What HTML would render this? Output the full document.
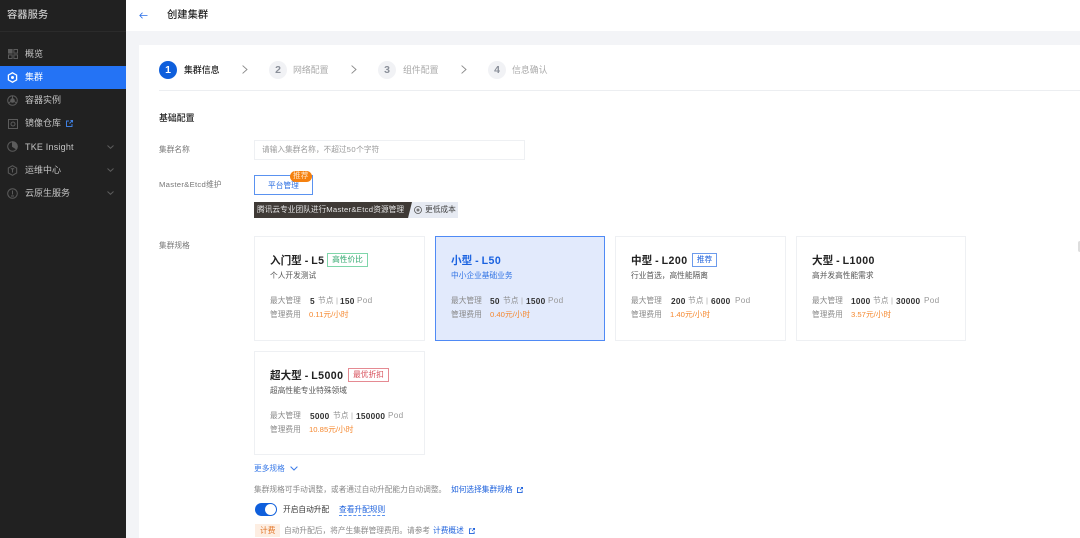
<!DOCTYPE html>
<html lang="zh-CN">
<head>
<meta charset="utf-8">
<title>创建集群</title>
<style>
*{box-sizing:border-box;margin:0;padding:0}
html,body{width:1080px;height:538px;overflow:hidden;background:#f3f4f7}
body{position:relative;font-family:"Liberation Sans","Noto Sans CJK SC",sans-serif;font-size:7.7px;color:#333;filter:blur(.3px)}
u{text-decoration:none;letter-spacing:.28px}
.t{position:absolute;white-space:nowrap;line-height:12px}
.a{position:absolute}
svg{position:absolute;overflow:visible}
#side{left:0;top:0;width:126px;height:538px;background:#212121}
.nav{color:#c4c4c4;font-size:9px}
.g{color:#777}
.card{position:absolute;width:171px;height:105px;background:#fff;border:1px solid #eef0f3}
.card.sel{background:#e2eafc;border:1px solid #4f8af5}
.title{position:absolute;left:15px;top:17px;line-height:14px;font-size:10.6px;font-weight:700;color:#222;white-space:nowrap}
.title u{letter-spacing:.45px}
.sub{position:absolute;left:15px;top:33px;line-height:12px;font-size:7.7px;color:#555;white-space:nowrap}
.r1{position:absolute;left:15px;top:58px;line-height:12px;font-size:7.7px;color:#888;white-space:nowrap}
.r2{position:absolute;left:15px;top:72px;line-height:12px;font-size:7.7px;color:#888;white-space:nowrap}
.r1 b{position:absolute;top:0;color:#333;font-weight:700;font-size:8.3px;letter-spacing:.25px}
.r1 i,.r2 i{position:absolute;top:0;font-style:normal}
.r1 i.p{font-size:8.2px;letter-spacing:.3px;color:#999}
.r2 i{color:#f5882f}
.tag{position:absolute;top:16px;height:14px;line-height:12px;font-size:7.7px;text-align:center;border:1px solid;white-space:nowrap}
.num{position:absolute;width:18px;height:18px;border-radius:50%;background:#f1f2f5;color:#8a8f99;text-align:center;line-height:18px;font-size:10.5px;font-weight:700;top:61px}
.step{position:absolute;top:64px;line-height:12px;font-size:8.9px;color:#aaa;white-space:nowrap}
.blue{color:#1d61dc}
</style>
</head>
<body>
<div id="side" class="a"></div>
<div class="a" style="left:0;top:31px;width:126px;height:1px;background:#2b2b2b"></div>
<div class="t" style="left:7px;top:9px;line-height:14px;font-size:10.3px;color:#c9c9c9;font-weight:500">容器服务</div>

<svg style="left:8px;top:49px" width="10" height="10" viewBox="0 0 10 10" fill="none" stroke="#5c5c5c" stroke-width="1"><rect x=".5" y=".5" width="3.6" height="3.6" fill="#5c5c5c"/><rect x="5.9" y=".5" width="3.6" height="3.6"/><rect x=".5" y="5.9" width="3.6" height="3.6"/><rect x="5.9" y="5.9" width="3.6" height="3.6"/></svg>
<div class="t nav" style="left:25px;top:48px">概览</div>

<div class="a" style="left:0;top:66px;width:126px;height:23px;background:#2473f5"></div>
<svg style="left:7px;top:72px" width="11" height="11" viewBox="0 0 11 11" fill="none" stroke="#fff" stroke-width="1.3"><path d="M5.5.8 9.6 3.1V7.900L5.500 10.200 1.400 7.900V3.100Z"/><circle cx="5.500" cy="5.500" r="1.500" fill="#fff" stroke="none"/></svg>
<div class="t nav" style="left:25px;top:71px;color:#fff">集群</div>

<svg style="left:7px;top:95px" width="11" height="11" viewBox="0 0 11 11" fill="none" stroke="#5c5c5c" stroke-width="1"><circle cx="5.500" cy="5.500" r="4.800"/><circle cx="5.500" cy="5.500" r="1.800" fill="#5c5c5c"/><path d="M5.500.8V3.500M1.400 8 3.800 6.500M9.600 8 7.200 6.500"/></svg>
<div class="t nav" style="left:25px;top:94px">容器实例</div>

<svg style="left:8px;top:119px" width="10" height="10" viewBox="0 0 10 10" fill="none" stroke="#5c5c5c" stroke-width="1"><rect x=".5" y=".5" width="9" height="9"/><circle cx="5" cy="5" r="2"/></svg>
<div class="t nav" style="left:25px;top:117px">镜像仓库</div>
<svg style="left:66px;top:120px" width="7" height="7" viewBox="0 0 7 7" fill="none" stroke="#3f7fe0" stroke-width="1"><path d="M3 1H.5V6.500H6V4M3.500 3.500 6.500.5M4.500.5H6.500V2.500"/></svg>

<svg style="left:7px;top:141px" width="11" height="11" viewBox="0 0 11 11" fill="none" stroke="#5c5c5c" stroke-width="1"><circle cx="5.500" cy="5.500" r="4.800"/><path d="M5.500.7V5.500L9.500 8A4.800 4.800 0 0 0 5.500.7Z" fill="#5c5c5c"/></svg>
<div class="t nav" style="left:25px;top:141px;letter-spacing:.2px">TKE Insight</div>
<svg style="left:107px;top:145px" width="7" height="4" viewBox="0 0 7 4" fill="none" stroke="#5c5c5c" stroke-width="1"><path d="M.5.500 3.500 3.300 6.500.5"/></svg>

<svg style="left:7px;top:165px" width="11" height="11" viewBox="0 0 11 11" fill="none" stroke="#5c5c5c" stroke-width="1"><path d="M5.500.7 9.700 3.100V7.900L5.500 10.300 1.300 7.900V3.100Z"/><path d="M3.800 3.800H7.200M5.500 3.800V7.500"/></svg>
<div class="t nav" style="left:25px;top:164px">运维中心</div>
<svg style="left:107px;top:168px" width="7" height="4" viewBox="0 0 7 4" fill="none" stroke="#5c5c5c" stroke-width="1"><path d="M.5.500 3.500 3.300 6.500.5"/></svg>

<svg style="left:7px;top:188px" width="11" height="11" viewBox="0 0 11 11" fill="none" stroke="#5c5c5c" stroke-width="1"><circle cx="5.500" cy="5.500" r="4.800"/><path d="M5.500 2.500V6.500M4 8H7"/></svg>
<div class="t nav" style="left:25px;top:187px">云原生服务</div>
<svg style="left:107px;top:191px" width="7" height="4" viewBox="0 0 7 4" fill="none" stroke="#5c5c5c" stroke-width="1"><path d="M.5.500 3.500 3.300 6.500.5"/></svg>

<!-- header -->
<div class="a" style="left:126px;top:0;width:954px;height:31px;background:#fff"></div>
<svg style="left:139px;top:12px" width="9" height="7" viewBox="0 0 9 7" fill="none" stroke="#2a6fe8" stroke-width=".8"><path d="M8.500 3.500H.8M3.500.7.800 3.500 3.500 6.300"/></svg>
<div class="t" style="left:167px;top:9px;line-height:14px;font-size:10.3px;color:#222;font-weight:500">创建集群</div>

<!-- panel -->
<div class="a" style="left:139px;top:45px;width:941px;height:493px;background:#fff"></div>
<div class="a" style="left:159px;top:90px;width:921px;height:1px;background:#eceef1"></div>

<div class="num" style="left:159px;background:#0f5fdc;color:#fff">1</div>
<div class="step" style="left:184px;color:#222;font-weight:500">集群信息</div>
<svg style="left:242px;top:65px" width="6" height="9" viewBox="0 0 6 9" fill="none" stroke="#888" stroke-width=".9"><path d="M.6.600 5 4.500.6 8.400"/></svg>
<div class="num" style="left:269px">2</div>
<div class="step" style="left:293px">网络配置</div>
<svg style="left:351px;top:65px" width="6" height="9" viewBox="0 0 6 9" fill="none" stroke="#888" stroke-width=".9"><path d="M.6.600 5 4.500.6 8.400"/></svg>
<div class="num" style="left:378px">3</div>
<div class="step" style="left:403px">组件配置</div>
<svg style="left:461px;top:65px" width="6" height="9" viewBox="0 0 6 9" fill="none" stroke="#888" stroke-width=".9"><path d="M.6.600 5 4.500.6 8.400"/></svg>
<div class="num" style="left:488px">4</div>
<div class="step" style="left:512px">信息确认</div>

<div class="t" style="left:159px;top:112px;font-size:8.9px;color:#222;font-weight:500">基础配置</div>

<div class="t g" style="left:159px;top:144px">集群名称</div>
<div class="a" style="left:254px;top:140px;width:271px;height:20px;border:1px solid #eef0f3;background:#fff"></div>
<div class="t" style="left:262px;top:144px;color:#999">请输入集群名称，不超过<u style="letter-spacing:.5px">50</u>个字符</div>

<div class="t g" style="left:159px;top:179px"><u>Master&amp;Etcd</u>维护</div>
<div class="a" style="left:254px;top:175px;width:59px;height:20px;border:1px solid #5a92f0;background:#fff"></div>
<div class="t" style="left:268px;top:180px;color:#2b6ee0">平台管理</div>
<div class="a" style="left:290px;top:171px;width:22px;height:11px;border-radius:6px;background:#f5810f"></div>
<div class="t" style="left:293px;top:170px;color:#ffe3c4;line-height:12px;font-size:7.7px">推荐</div>

<div class="a" style="left:254px;top:202px;width:204px;height:16px;background:#e6eaf2"></div>
<div class="a" style="left:254px;top:202px;width:158px;height:16px;background:#3f3a36;clip-path:polygon(0 0,100% 0,97.500% 100%,0 100%)"></div>
<div class="t" style="left:257px;top:204px;color:#e6e6e6">腾讯云专业团队进行<u>Master&amp;Etcd</u>资源管理</div>
<svg style="left:414px;top:206px" width="8" height="8" viewBox="0 0 8 8" fill="none" stroke="#555" stroke-width=".8"><circle cx="4" cy="4" r="3.500"/><circle cx="4" cy="4" r="1.500" fill="#777" stroke="none"/></svg>
<div class="t" style="left:425px;top:204px;color:#444">更低成本</div>

<div class="t g" style="left:159px;top:240px">集群规格</div>

<div class="a" style="left:1078px;top:241px;width:2px;height:11px;background:#ddd;border-radius:2px 0 0 2px"></div>

<!-- cards -->
<div class="card" style="left:254px;top:236px;width:171px">
  <div class="title">入门型 - <u>L5</u></div>
  <div class="tag" style="left:72px;width:41px;color:#2fa76c;border-color:#7fd6aa">高性价比</div>
  <div class="sub">个人开发测试</div>
  <div class="r1">最大管理<b style="left:40px">5</b><i style="left:48px">节点</i><i style="left:66px;color:#aaa">|</i><b style="left:70px">150</b><i class="p" style="left:87px">Pod</i></div>
  <div class="r2">管理费用<i style="left:39px">0.11元/小时</i></div>
</div>
<div class="card sel" style="left:435px;top:236px;width:170px">
  <div class="title" style="color:#1a62e0">小型 - <u>L50</u></div>
  <div class="sub" style="color:#2f72e4">中小企业基础业务</div>
  <div class="r1">最大管理<b style="left:39px">50</b><i style="left:52px">节点</i><i style="left:70px;color:#aaa">|</i><b style="left:75px">1500</b><i class="p" style="left:97px">Pod</i></div>
  <div class="r2">管理费用<i style="left:39px">0.40元/小时</i></div>
</div>
<div class="card" style="left:615px;top:236px;width:171px">
  <div class="title">中型 - <u>L200</u></div>
  <div class="tag" style="left:76px;width:25px;color:#1d61dc;border-color:#6c9bec">推荐</div>
  <div class="sub">行业首选，高性能隔离</div>
  <div class="r1">最大管理<b style="left:40px">200</b><i style="left:57px">节点</i><i style="left:75px;color:#aaa">|</i><b style="left:80px">6000</b><i class="p" style="left:104px">Pod</i></div>
  <div class="r2">管理费用<i style="left:39px">1.40元/小时</i></div>
</div>
<div class="card" style="left:796px;top:236px;width:170px">
  <div class="title">大型 - <u>L1000</u></div>
  <div class="sub">高并发高性能需求</div>
  <div class="r1">最大管理<b style="left:39px">1000</b><i style="left:61px">节点</i><i style="left:79px;color:#aaa">|</i><b style="left:84px">30000</b><i class="p" style="left:112px">Pod</i></div>
  <div class="r2">管理费用<i style="left:39px">3.57元/小时</i></div>
</div>
<div class="card" style="left:254px;top:351px;width:171px;height:104px">
  <div class="title">超大型 - <u>L5000</u></div>
  <div class="tag" style="left:93px;width:41px;color:#d64a55;border-color:#e58a92">最优折扣</div>
  <div class="sub">超高性能专业特殊领域</div>
  <div class="r1">最大管理<b style="left:40px">5000</b><i style="left:63px">节点</i><i style="left:81px;color:#aaa">|</i><b style="left:86px">150000</b><i class="p" style="left:118px">Pod</i></div>
  <div class="r2">管理费用<i style="left:39px">10.85元/小时</i></div>
</div>

<div class="t blue" style="left:254px;top:463px;color:#3b7be8">更多规格</div>
<svg style="left:290px;top:466px" width="8" height="5" viewBox="0 0 8 5" fill="none" stroke="#3b7be8" stroke-width="1"><path d="M.6.600 4 4 7.400.6"/></svg>

<div class="t" style="left:254px;top:484px;color:#888">集群规格可手动调整，或者通过自动升配能力自动调整。</div>
<div class="t blue" style="left:451px;top:484px">如何选择集群规格</div>
<svg style="left:517px;top:487px" width="6" height="6" viewBox="0 0 7 7" fill="none" stroke="#1d61dc" stroke-width="1"><path d="M3 1H.5V6.500H6V4M3.500 3.500 6.500.5M4.500.5H6.500V2.500"/></svg>

<div class="a" style="left:255px;top:503px;width:22px;height:13px;border-radius:7px;background:#0f5fdc"></div>
<div class="a" style="left:265px;top:504px;width:11px;height:11px;border-radius:50%;background:#fff"></div>
<div class="t" style="left:283px;top:504px;color:#333">开启自动升配</div>
<div class="t blue" style="left:339px;top:504px;border-bottom:1px dashed #5a92f0;line-height:11px">查看升配规则</div>

<div class="a" style="left:255px;top:524px;width:25px;height:13px;background:#fdeee2"></div>
<div class="t" style="left:260px;top:525px;color:#e0701f">计费</div>
<div class="t" style="left:284px;top:525px;color:#888">自动升配后，将产生集群管理费用。请参考</div>
<div class="t blue" style="left:433px;top:525px">计费概述</div>
<svg style="left:469px;top:528px" width="6" height="6" viewBox="0 0 7 7" fill="none" stroke="#1d61dc" stroke-width="1"><path d="M3 1H.5V6.500H6V4M3.500 3.500 6.500.5M4.500.5H6.500V2.500"/></svg>
</body>
</html>
